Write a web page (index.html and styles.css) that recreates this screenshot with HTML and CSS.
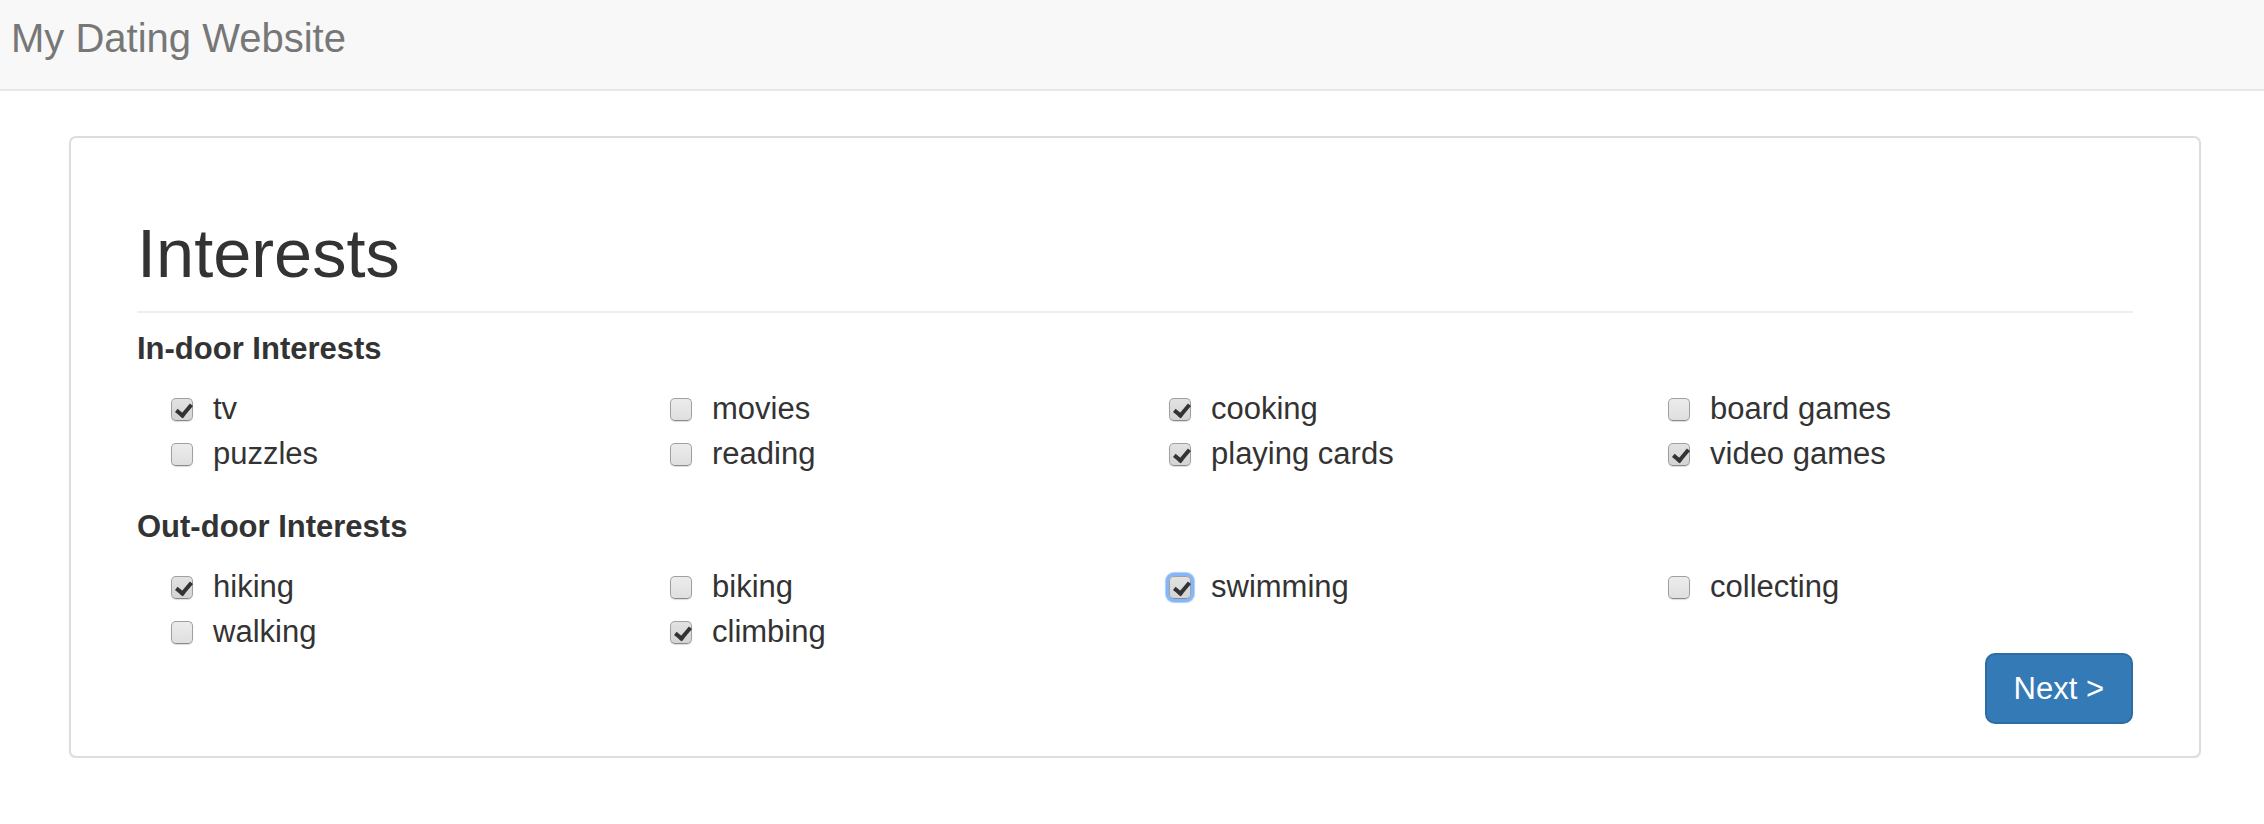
FILE: index.html
```html
<!DOCTYPE html>
<html lang="en">
<head>
<meta charset="utf-8">
<title>My Dating Website</title>
<link rel="stylesheet" href="styles.css">
</head>
<body>
<nav class="navbar">
  <a class="brand" href="#">My Dating Website</a>
</nav>
<main class="panel">
  <h1 class="page-title">Interests</h1>
  <section class="group">
    <h2 class="group-title">In-door Interests</h2>
    <div class="options">
      <label class="opt"><input type="checkbox" checked><span class="cb"></span>tv</label>
      <label class="opt"><input type="checkbox"><span class="cb"></span>movies</label>
      <label class="opt"><input type="checkbox" checked><span class="cb"></span>cooking</label>
      <label class="opt"><input type="checkbox"><span class="cb"></span>board games</label>
      <label class="opt"><input type="checkbox"><span class="cb"></span>puzzles</label>
      <label class="opt"><input type="checkbox"><span class="cb"></span>reading</label>
      <label class="opt"><input type="checkbox" checked><span class="cb"></span>playing cards</label>
      <label class="opt"><input type="checkbox" checked><span class="cb"></span>video games</label>
    </div>
  </section>
  <section class="group group-out">
    <h2 class="group-title">Out-door Interests</h2>
    <div class="options">
      <label class="opt"><input type="checkbox" checked><span class="cb"></span>hiking</label>
      <label class="opt"><input type="checkbox"><span class="cb"></span>biking</label>
      <label class="opt"><input type="checkbox" checked><span class="cb focus"></span>swimming</label>
      <label class="opt"><input type="checkbox"><span class="cb"></span>collecting</label>
      <label class="opt"><input type="checkbox"><span class="cb"></span>walking</label>
      <label class="opt"><input type="checkbox" checked><span class="cb"></span>climbing</label>
    </div>
  </section>
  <div class="actions">
    <button class="btn-next" type="button">Next &gt;</button>
  </div>
</main>
</body>
</html>
```
FILE: styles.css
```css
* { box-sizing: border-box; }

html, body {
  margin: 0;
  padding: 0;
  background: #fff;
}

body {
  font-family: "Liberation Sans", Arial, Helvetica, sans-serif;
  color: #333;
}

.navbar {
  height: 91px;
  background: #f8f8f8;
  border-bottom: 2px solid #e7e7e7;
  padding: 18px 0 0 11px;
}

.brand {
  display: inline-block;
  font-size: 40px;
  line-height: 1;
  color: #777;
  text-decoration: none;
}

.panel {
  margin: 45px 63px 0 69px;
  border: 2px solid #dddddd;
  border-radius: 7px;
  box-shadow: 0 1px 2px rgba(0, 0, 0, 0.05);
  padding: 78px 66px 32px 66px;
  background: #fff;
}

.page-title {
  margin: 0;
  font-size: 68.5px;
  font-weight: 400;
  line-height: 1.1;
  padding-bottom: 20px;
  border-bottom: 2px solid #eee;
  color: #333;
}

.group-title {
  margin: 0 0 20px;
  font-size: 31px;
  font-weight: 700;
  line-height: 34px;
  color: #333;
}

.group { margin-top: 19px; }
.group-out { margin-top: 34px; }

.options {
  display: grid;
  grid-template-columns: repeat(4, 1fr);
}

.opt {
  display: flex;
  align-items: center;
  height: 45px;
  padding-left: 34px;
  font-size: 31px;
  line-height: 45px;
  color: #333;
  cursor: pointer;
}

.opt input {
  position: absolute;
  opacity: 0;
  width: 0;
  height: 0;
  margin: 0;
}

.cb {
  position: relative;
  flex: none;
  width: 22px;
  height: 23px;
  margin: 2px 20px 0 0;
  border: 1px solid #a0a0a0;
  border-bottom-color: #8a8a8a;
  border-radius: 5px;
  background: linear-gradient(#ececec, #dfdfdf);
  box-shadow: 0 1px 1px rgba(0, 0, 0, 0.14);
}

.opt input:checked + .cb {
  background: linear-gradient(#e2e2e2, #d4d4d4);
}

.opt input:checked + .cb::after {
  content: "";
  position: absolute;
  left: 7px;
  top: 2px;
  width: 6px;
  height: 12px;
  border-right: 4px solid #333;
  border-bottom: 4px solid #333;
  transform: rotate(40deg);
}

.cb.focus {
  box-shadow: 0 0 0 3px #84b7f7, 0 0 1px 4px rgba(120, 170, 245, 0.6);
}

.actions {
  display: flex;
  justify-content: flex-end;
  margin-top: -1px;
}

.btn-next {
  height: 71px;
  padding: 0 27px;
  font-family: inherit;
  font-size: 31px;
  line-height: 67px;
  color: #fff;
  background: #337ab7;
  border: 2px solid #2e6da4;
  border-radius: 10px;
  cursor: pointer;
}
```
